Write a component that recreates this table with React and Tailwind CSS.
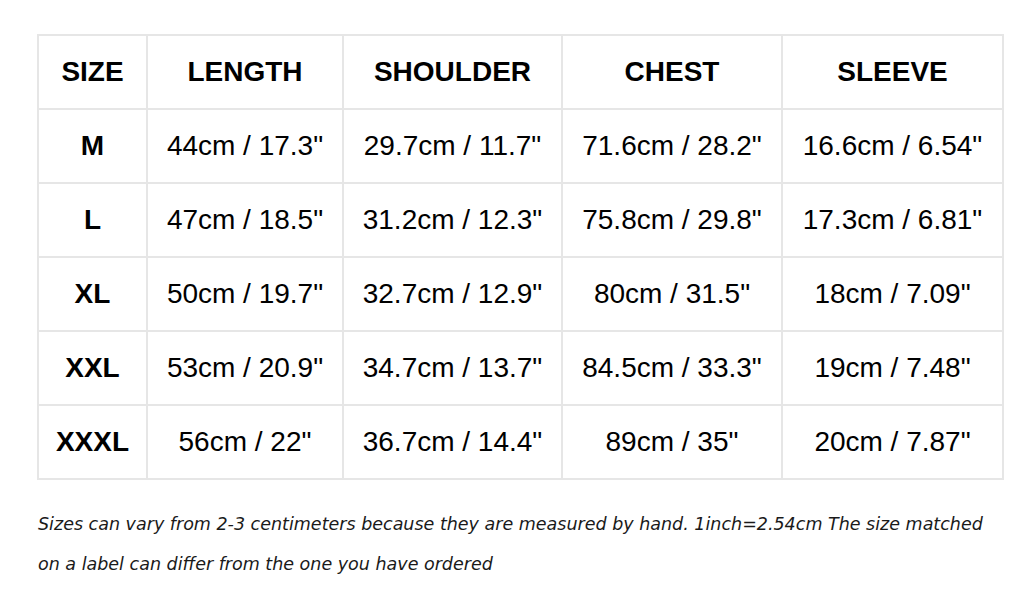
import React from 'react';

const headers = ['SIZE', 'LENGTH', 'SHOULDER', 'CHEST', 'SLEEVE'];

const rows = [
  ['M', '44cm / 17.3"', '29.7cm / 11.7"', '71.6cm / 28.2"', '16.6cm / 6.54"'],
  ['L', '47cm / 18.5"', '31.2cm / 12.3"', '75.8cm / 29.8"', '17.3cm / 6.81"'],
  ['XL', '50cm / 19.7"', '32.7cm / 12.9"', '80cm / 31.5"', '18cm / 7.09"'],
  ['XXL', '53cm / 20.9"', '34.7cm / 13.7"', '84.5cm / 33.3"', '19cm / 7.48"'],
  ['XXXL', '56cm / 22"', '36.7cm / 14.4"', '89cm / 35"', '20cm / 7.87"'],
];

const App = () => {
  return (
    <div className="min-h-screen bg-white pt-[34px] pl-[37px]">
      <table className="w-[965px] table-fixed border-collapse text-[28px] text-black font-['Liberation_Sans',Arial,sans-serif]">
        <colgroup>
          <col className="w-[109px]" />
          <col className="w-[196px]" />
          <col className="w-[219px]" />
          <col className="w-[220px]" />
          <col className="w-[221px]" />
        </colgroup>
        <thead>
          <tr className="h-[74px]">
            {headers.map((h) => (
              <th key={h} className="border-2 border-[#e6e6e6] text-center font-bold p-0">
                {h}
              </th>
            ))}
          </tr>
        </thead>
        <tbody>
          {rows.map((row) => (
            <tr key={row[0]} className="h-[74px]">
              {row.map((cell, i) => (
                <td
                  key={i}
                  className={`border-2 border-[#e6e6e6] text-center p-0 whitespace-nowrap ${i === 0 ? 'font-bold' : ''}`}
                >
                  {cell}
                </td>
              ))}
            </tr>
          ))}
        </tbody>
      </table>

      {/* size note */}
      <p className="mt-[24px] pl-[1px] whitespace-nowrap text-[17.5px] leading-[40px] italic text-[#1a1a1a] font-['DejaVu_Sans',Verdana,sans-serif]">
        Sizes can vary from 2-3 centimeters because they are measured by hand. 1inch=2.54cm The size matched
        <br />
        on a label can differ from the one you have ordered
      </p>
    </div>
  );
};

export default App;
